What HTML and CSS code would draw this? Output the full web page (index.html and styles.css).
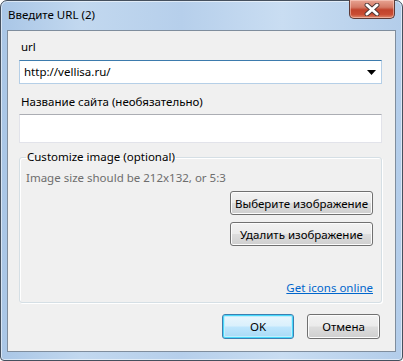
FILE: index.html
```html
<!DOCTYPE html>
<html lang="ru">
<head>
<meta charset="utf-8">
<title>Введите URL (2)</title>
<link rel="stylesheet" href="styles.css">
</head>
<body>
<div class="window">
  <div class="titlebar">
    <span class="title">Введите URL (2)</span>
    <div class="close">
      <svg width="22" height="13" viewBox="0 0 22 13"><path d="M6 2 L16 11 M16 2 L6 11" stroke="#4a3535" stroke-width="4.8" stroke-linecap="round"/><path d="M6 2 L16 11 M16 2 L6 11" stroke="#fff" stroke-width="3" stroke-linecap="round"/></svg>
    </div>
  </div>
  <div class="client">
    <div class="label label-url">url</div>
    <div class="combo">
      <span class="combo-text">http://vellisa.ru/</span>
      <svg class="arrow" width="9" height="5" viewBox="0 0 9 5"><path d="M0 0 H9 L4.5 5 Z" fill="#000"/></svg>
    </div>
    <div class="label label-name">Название сайта (необязательно)</div>
    <div class="textbox"></div>
    <fieldset class="group">
      <legend class="legend">Customize image (optional)</legend>
      <div class="group-body">
        <div class="hint">Image size should be 212x132, or 5:3</div>
        <div class="side-buttons">
          <button class="btn btn-wide">Выберите изображение</button>
          <button class="btn btn-wide">Удалить изображение</button>
        </div>
        <div class="link-row"><a class="link" href="#">Get icons online</a></div>
      </div>
    </fieldset>
    <div class="footer">
      <button class="btn btn-ok">OK</button>
      <button class="btn btn-cancel">Отмена</button>
    </div>
  </div>
</div>
</body>
</html>
```

FILE: styles.css
```css
* { box-sizing: border-box; }
html, body { margin: 0; padding: 0; }
body {
  width: 403px;
  height: 361px;
  background: #ffffff;
  font-family: "Noto Sans", "Open Sans", sans-serif;
  font-size: 11.5px;
  overflow: hidden;
}
.window {
  width: 403px;
  height: 361px;
  border: 1px solid #45505e;
  border-radius: 7px 7px 4px 4px;
  background: linear-gradient(90deg, #a9c6e6 0%, #c2d8ef 20%, #b6cfeb 45%, #c9ddf2 70%, #b3cdea 100%);
  display: flex;
  flex-direction: column;
  box-shadow: inset 0 0 0 1px rgba(255,255,255,0.55);
}
.titlebar {
  height: 29px;
  display: flex;
  justify-content: space-between;
  align-items: flex-start;
  padding-left: 7px;
  padding-right: 7px;
}
.title {
  margin-top: 6px;
  color: #000;
  font-size: 11.5px;
  line-height: 16px;
}
.close {
  width: 46px;
  height: 19px;
  margin-top: -1px;
  border: 1px solid #5c3a37;
  border-top: none;
  border-radius: 0 0 5px 5px;
  background: linear-gradient(180deg, #e8a493 0%, #d47a66 40%, #c1432c 55%, #c94c33 80%, #de8a6e 100%);
  display: flex;
  align-items: center;
  justify-content: center;
  box-shadow: inset 0 0 0 1px rgba(255,220,210,0.5);
}
.client {
  margin: 0 6px 0 6px;
  height: 322px;
  border: 1px solid #7f8d9d;
  background: #f0f0f0;
  padding: 0 13px 0 11px;
  display: flex;
  flex-direction: column;
}
.label {
  color: #000;
  line-height: 16px;
  padding-left: 2px;
}
.label-url { margin-top: 8px; }
.combo {
  margin-top: 5px;
  height: 24px;
  background: #fff;
  border: 1px solid #b5cfe7;
  border-top-color: #3d7bad;
  display: flex;
  align-items: center;
  justify-content: space-between;
  padding: 0 5px 0 4px;
}
.combo-text { color: #000; line-height: 16px; }
.arrow { display: block; }
.label-name { margin-top: 10px; }
.textbox {
  margin-top: 4px;
  height: 29px;
  background: #fff;
  border: 1px solid #e2e3ea;
  border-top-color: #abadb3;
}
.group {
  margin: 6px 0 0 0;
  padding: 0 8px 0 6px;
  border: 1px solid #d5dfe5;
  border-radius: 3px;
  box-shadow: inset 1px 1px 0 #ffffff, 1px 1px 0 #ffffff;
  min-width: 0;
}
.legend {
  padding: 0 1px;
  margin-left: 0;
  line-height: 16px;
  color: #000;
}
.group-body {
  height: 137px;
  display: flex;
  flex-direction: column;
}
.hint {
  color: #6d6d6d;
  line-height: 16px;
  margin-top: 5px;
}
.side-buttons {
  display: flex;
  flex-direction: column;
  align-items: flex-end;
  gap: 7px;
  margin-top: 5px;
}
.btn {
  font-family: "Noto Sans", "Open Sans", sans-serif;
  font-size: 11.5px;
  color: #000;
  border: 1px solid #707070;
  border-radius: 3px;
  background: linear-gradient(180deg, #f2f2f2 0%, #ebebeb 48%, #dddddd 52%, #cfcfcf 100%);
  box-shadow: inset 0 0 0 1px #fcfcfc;
  padding: 0;
  margin: 0;
}
.btn-wide { width: 143px; height: 24px; }
.link-row {
  margin-top: auto;
  margin-bottom: 6px;
  display: flex;
  justify-content: flex-end;
}
.link {
  color: #0066cc;
  text-decoration: underline;
  line-height: 16px;
}
.footer {
  margin-top: 11px;
  display: flex;
  justify-content: flex-end;
  gap: 13px;
  padding-right: 2px;
}
.btn-ok {
  width: 72px;
  height: 25px;
  border-color: #3c7fb1;
  box-shadow: inset 0 0 0 1px #48d8fb, inset 0 0 0 2px #c0eefc;
  background: linear-gradient(180deg, #eaf6fd 0%, #d9f0fc 48%, #bee6fd 52%, #a7d9f5 100%);
}
.btn-cancel { width: 73px; height: 25px; }
```
